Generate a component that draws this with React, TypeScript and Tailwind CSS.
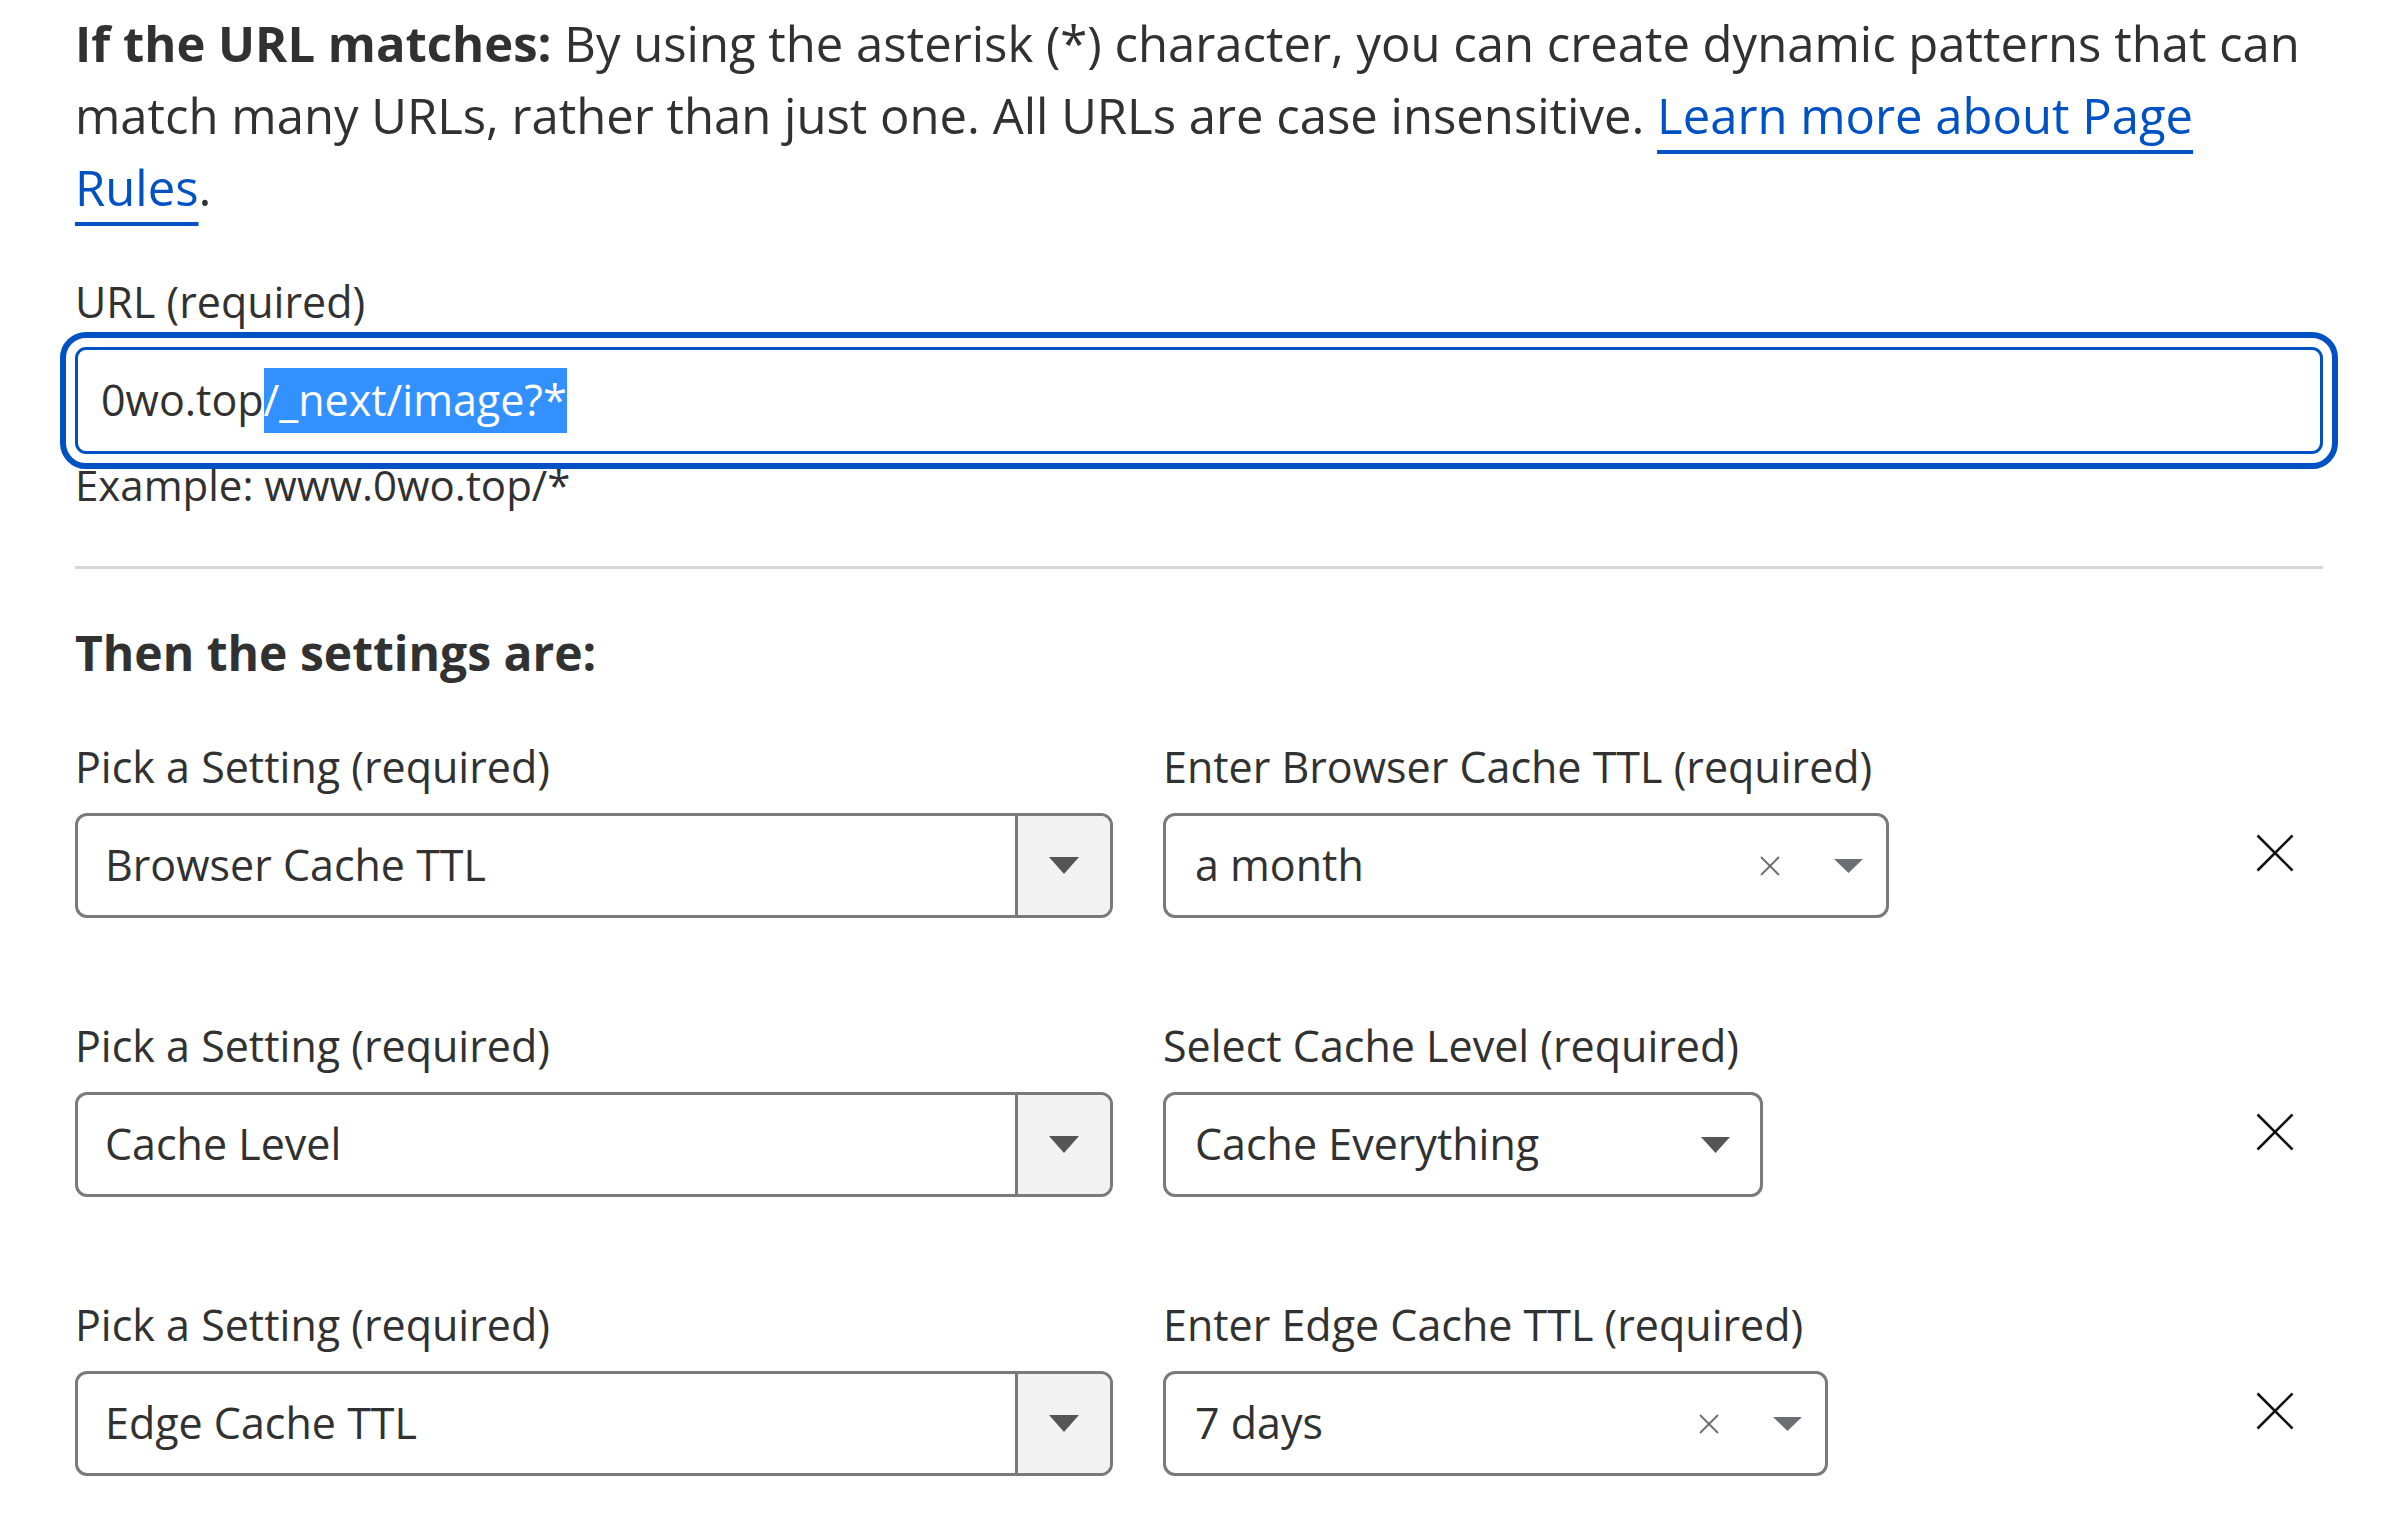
import React from "react";

function Tri({ w, h, color }: { w: number; h: number; color: string }) {
  return (
    <svg width={w} height={h} viewBox={`0 0 ${w} ${h}`} className="block shrink-0">
      <polygon points={`0,0 ${w},0 ${w / 2},${h}`} fill={color} />
    </svg>
  );
}

function SmallX() {
  return (
    <svg width="22" height="22" viewBox="0 0 22 22" className="block shrink-0">
      <line x1="2" y1="2" x2="20" y2="20" stroke="#6b6b6b" strokeWidth="1.8" />
      <line x1="20" y1="2" x2="2" y2="20" stroke="#6b6b6b" strokeWidth="1.8" />
    </svg>
  );
}

function BigX() {
  return (
    <svg width="38" height="38" viewBox="0 0 38 38" className="block">
      <line x1="1.5" y1="1.5" x2="36.5" y2="36.5" stroke="#111" strokeWidth="2.6" />
      <line x1="36.5" y1="1.5" x2="1.5" y2="36.5" stroke="#111" strokeWidth="2.6" />
    </svg>
  );
}

function SettingRow({
  setting,
  rightLabel,
  value,
  width,
  clearable,
}: {
  setting: string;
  rightLabel: string;
  value: string;
  width: string;
  clearable: boolean;
}) {
  return (
    <div className="flex items-end">
      <div className="w-[1038px] shrink-0">
        <div className="text-[43px] leading-[58px]">Pick a Setting (required)</div>
        <div className="mt-[17px] h-[105px] flex border-[3px] border-[#7a7a7a] rounded-[12px] overflow-hidden bg-white">
          <div className="flex-1 flex items-center pl-[27px] text-[43px]">{setting}</div>
          <div className="w-[95px] border-l-[3px] border-[#7a7a7a] bg-[#f2f2f2] flex items-center justify-center">
            <Tri w={30} h={17} color="#555555" />
          </div>
        </div>
      </div>
      <div className="ml-[50px] shrink-0">
        <div className="text-[43px] leading-[58px]">{rightLabel}</div>
        <div
          className={`mt-[17px] h-[105px] flex items-center border-[3px] border-[#7a7a7a] rounded-[12px] bg-white pl-[29px] ${width} ${
            clearable ? "pr-[23px]" : "pr-[30px]"
          }`}
        >
          <div className="flex-1 text-[43px]">{value}</div>
          {clearable ? (
            <>
              <SmallX />
              <div className="w-[53px]" />
              <Tri w={29} h={14} color="#6b6f73" />
            </>
          ) : (
            <Tri w={29} h={16} color="#555555" />
          )}
        </div>
      </div>
      <div className="flex-1 h-[105px] flex items-center justify-end pr-[29px] pb-[26px]">
        <BigX />
      </div>
    </div>
  );
}

export default function App() {
  return (
    <div className="min-h-screen w-full bg-white text-[#313131] font-['Open_Sans',sans-serif]">
      <div className="pl-[75px] pr-[62px] pt-[7px]">
        <p className="text-[49px] leading-[72px] max-w-[2236px]">
          <span className="font-bold">If the URL matches:</span> By using the asterisk (*) character, you can create
          dynamic patterns that can match many URLs, rather than just one. All URLs are case insensitive.{" "}
          <a className="text-[#0051c3] underline decoration-4 underline-offset-[16px]">Learn more about Page Rules</a>.
        </p>

        <div className="mt-[50px] text-[43px] leading-[58px]">URL (required)</div>
        <div className="mt-[16px] h-[107px] flex items-center border-[3px] border-[#0051c3] rounded-[11px] outline-solid outline-[6px] outline-[#0051c3] outline-offset-[9px] pl-[23px] text-[43px] bg-white">
          <span>0wo.top</span>
          <span className="bg-[#3390ff] text-white">/_next/image?*</span>
        </div>
        <div className="mt-[2px] text-[42px] leading-[58px]">Example: www.0wo.top/*</div>

        <div className="mt-[52px] h-[3px] bg-[#d6d6d6]" />

        <h2 className="mt-[48px] text-[48px] leading-[72px] font-bold">Then the settings are:</h2>

        <div className="mt-[49px] flex flex-col gap-[99px]">
          <SettingRow
            setting="Browser Cache TTL"
            rightLabel="Enter Browser Cache TTL (required)"
            value="a month"
            width="w-[726px]"
            clearable
          />
          <SettingRow
            setting="Cache Level"
            rightLabel="Select Cache Level (required)"
            value="Cache Everything"
            width="w-[600px]"
            clearable={false}
          />
          <SettingRow
            setting="Edge Cache TTL"
            rightLabel="Enter Edge Cache TTL (required)"
            value="7 days"
            width="w-[665px]"
            clearable
          />
        </div>
      </div>
    </div>
  );
}
